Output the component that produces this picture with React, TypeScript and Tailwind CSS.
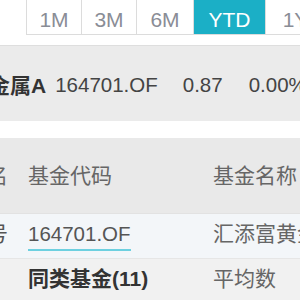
import React from "react";

const tabs = [
  { label: "1M", w: "w-[55px]" },
  { label: "3M", w: "w-[55px]" },
  { label: "6M", w: "w-[57px]" },
  { label: "YTD", w: "w-[72px]", active: true },
  { label: "1Y", w: "w-[60px]" },
];

export default function App() {
  return (
    <div className="w-[300px] h-[300px] overflow-hidden bg-white text-[21px] leading-none" style={{ fontFamily: '"Liberation Sans", Arial, "Noto Sans CJK SC", sans-serif' }}>
      {/* tabs */}
      <div className="h-[45px] bg-white flex items-start pl-[26px]">
        <div className="flex h-[36px] shrink-0 -mt-[1px]">
          {tabs.map((t) => (
            <div
              key={t.label}
              className={
                "shrink-0 h-full flex items-center justify-center pt-[6px] border-l border-b border-[#dcdcdc] " +
                t.w +
                (t.active ? " bg-[#1bafc6] text-white border-[#1bafc6]" : " bg-white text-[#8a8d96]")
              }
            >
              {t.label}
            </div>
          ))}
        </div>
      </div>
      {/* fund row */}
      <div className="h-[76px] bg-[#ebebeb] border-t border-[#dedede] flex items-center whitespace-nowrap">
        <div className="flex items-center shrink-0 -ml-[32px] pt-[3px]">
          <span className="font-bold text-[#333]">贵金属A</span>
          <span className="ml-[9px] text-[#444] text-[20.5px]">164701.OF</span>
          <span className="ml-[25px] text-[#444] text-[20.5px]">0.87</span>
          <span className="ml-[26px] text-[#444] text-[20.5px]">0.00%</span>
        </div>
      </div>
      {/* white gap */}
      <div className="h-[17px] bg-white" />
      {/* header */}
      <div className="h-[75px] bg-[#e9e9e9] flex items-center whitespace-nowrap text-[#666]">
        <div className="w-[28px] shrink-0 flex justify-end overflow-hidden">
          <span className="shrink-0 mr-[20px]">排名</span>
        </div>
        <div className="w-[185px] shrink-0">基金代码</div>
        <div className="shrink-0">基金名称</div>
      </div>
      {/* row 1 */}
      <div className="h-[45px] bg-[#f3f6f9] flex items-center pb-[5px] whitespace-nowrap text-[#555] border-t border-[#e2e2e2]">
        <div className="w-[28px] shrink-0 flex justify-end overflow-hidden">
          <span className="shrink-0 mr-[20px]">序号</span>
        </div>
        <div className="w-[185px] shrink-0">
          <span className="border-b-2 border-[#6dd0e0] pb-[4px] text-[20.5px]">164701.OF</span>
        </div>
        <div className="shrink-0 text-[#666]">汇添富黄金及贵金属A</div>
      </div>
      {/* row 2 */}
      <div className="h-[44px] bg-[#f1f1f1] flex items-center pb-[4px] whitespace-nowrap border-t border-[#e6e6e6]">
        <div className="w-[28px] shrink-0" />
        <div className="w-[185px] shrink-0 font-bold text-[#333]">同类基金(11)</div>
        <div className="shrink-0 text-[#666]">平均数</div>
      </div>
    </div>
  );
}
